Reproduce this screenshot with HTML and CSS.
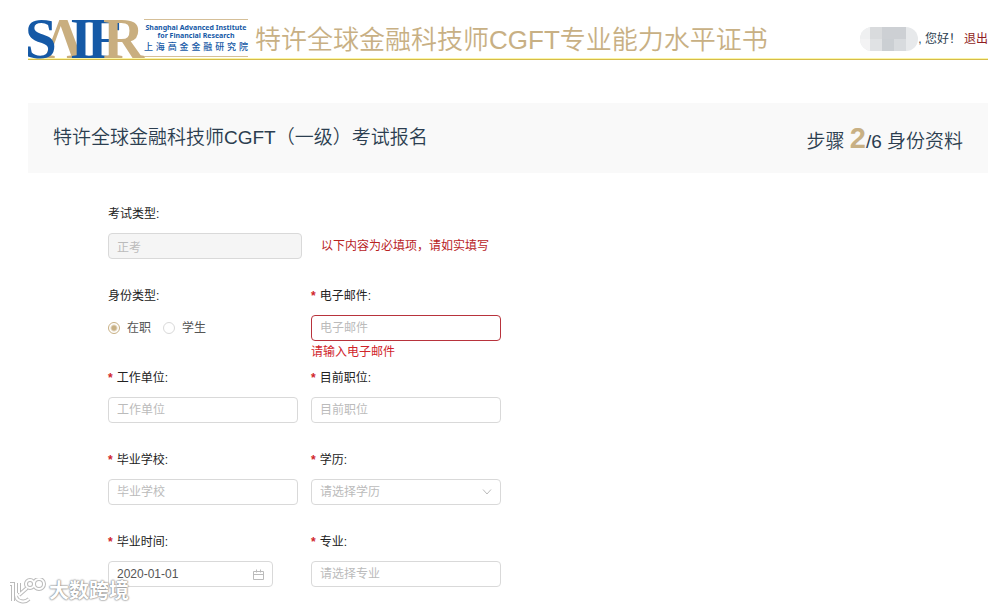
FILE: index.html
```html
<!DOCTYPE html>
<html lang="zh-CN">
<head>
    <meta charset="UTF-8">
    <meta name="viewport" content="width=device-width, initial-scale=1.0">
    <title>特许全球金融科技师CGFT考试报名</title>
    <link rel="stylesheet" href="styles.css">
</head>
<body>
    <header class="header">
        <div class="logo">
            <svg class="logo-mark" width="114" height="40" viewBox="0 0 114 40" role="img" aria-label="SAIFR">
                <text class="gold bold" x="15" y="40">Λ</text>
                <text class="blue bold" x="-3" y="40">S</text>
                <text class="blue bold" x="42" y="40">I</text>
                <text class="blue bold" x="59" y="40">F</text>
                <text class="gold bold" x="75" y="40">R</text>
            </svg>
            <div class="logo-text">
                <span>Shanghai Advanced Institute</span>
                <span>for Financial Research</span>
                <span class="logo-cn">上海高金金融研究院</span>
            </div>
        </div>
        <h1>特许全球金融科技师CGFT专业能力水平证书</h1>
        <div class="user">
            <svg class="user-name" width="58" height="24" viewBox="0 0 58 24" aria-hidden="true">
                <clipPath id="pill"><rect width="58" height="24" rx="12"/></clipPath>
                <g clip-path="url(#pill)">
                    <rect width="58" height="24" fill="#e7e9eb"/>
                    <rect width="10" height="12" fill="#eff0f1"/>
                    <rect x="10" width="12" height="12" fill="#d9dbdd"/>
                    <rect x="22" width="24" height="12" fill="#cdd0d4"/>
                    <rect y="12" width="10" height="12" fill="#f3f3f4"/>
                    <rect x="10" y="12" width="12" height="12" fill="#e0e2e4"/>
                    <rect x="22" y="12" width="12" height="12" fill="#cbcfd3"/>
                    <rect x="34" y="12" width="12" height="12" fill="#d8dbde"/>
                </g>
            </svg>
            <span>, 您好！</span>
            <a href="#">退出</a>
        </div>
    </header>

    <main>
        <div class="title-bar">
            <h2>特许全球金融科技师CGFT（一级）考试报名</h2>
            <div class="step">步骤 <b>2</b>/6 身份资料</div>
        </div>

        <form class="form" novalidate>
            <div class="field wide">
                <label for="examType">考试类型:</label>
                <div class="line">
                    <input class="exam-type" type="text" id="examType" value="正考" disabled>
                    <span class="notice">以下内容为必填项，请如实填写</span>
                </div>
            </div>

            <div class="field" role="radiogroup" aria-labelledby="identityLabel">
                <span class="label" id="identityLabel">身份类型:</span>
                <div class="line radios">
                    <label><input type="radio" name="identity" checked>在职</label>
                    <label><input type="radio" name="identity">学生</label>
                </div>
            </div>
            <div class="field error">
                <label class="required" for="email">电子邮件:</label>
                <input type="email" id="email" placeholder="电子邮件">
                <div class="message">请输入电子邮件</div>
            </div>

            <div class="field">
                <label class="required" for="company">工作单位:</label>
                <input type="text" id="company" placeholder="工作单位">
            </div>
            <div class="field">
                <label class="required" for="position">目前职位:</label>
                <input type="text" id="position" placeholder="目前职位">
            </div>

            <div class="field">
                <label class="required" for="school">毕业学校:</label>
                <input type="text" id="school" placeholder="毕业学校">
            </div>
            <div class="field">
                <label class="required" for="degree">学历:</label>
                <div class="with-icon">
                    <select id="degree">
                        <option value="">请选择学历</option>
                        <option>本科</option>
                        <option>硕士</option>
                        <option>博士</option>
                    </select>
                    <svg width="10" height="10" viewBox="0 0 10 10"><path d="M1 2.5l4 4.5 4-4.5"/></svg>
                </div>
            </div>

            <div class="field">
                <label class="required" for="gradDate">毕业时间:</label>
                <div class="with-icon date">
                    <input type="text" id="gradDate" value="2020-01-01">
                    <svg width="11" height="11" viewBox="0 0 11 11"><path d="M.5 2.5h10v8H.5zM.5 5.5h10M3.5.5v3M7.5.5v3"/></svg>
                </div>
            </div>
            <div class="field">
                <label class="required" for="major">专业:</label>
                <input type="text" id="major" placeholder="请选择专业">
            </div>
        </form>
    </main>

    <div class="watermark">
        <svg width="38" height="27" viewBox="0 0 38 27" aria-hidden="true">
            <g class="wm-shade">
                <path d="M2 6h3v17M11 5v10M19 10l-8 7M8 18c1 6 9 7 13 3"/>
                <circle cx="22" cy="6" r="4"/><circle cx="31" cy="6" r="5"/>
            </g>
            <g class="wm-line">
                <path d="M2 6h3v17M11 5v10M19 10l-8 7M8 18c1 6 9 7 13 3"/>
                <circle cx="22" cy="6" r="4"/><circle cx="31" cy="6" r="5"/>
            </g>
        </svg>
        <span>大数跨境</span>
    </div>
</body>
</html>
```

FILE: styles.css
```css
* {
    box-sizing: border-box;
}
body {
    margin: 0;
    padding: 17px 17px 0 28px;
    font-family: "Liberation Sans", "Noto Sans CJK SC", sans-serif;
    font-size: 12px;
    line-height: 18px;
    color: #222;
    background-color: #fff;
}
h1, h2 {
    margin: 0;
    font-weight: 350;
}

.header {
    display: flex;
    align-items: center;
    height: 43px;
    border-bottom: 1px solid #d6bc4a;
    box-shadow: inset 0 -1px #fbf6a6;
}
.logo {
    display: flex;
    align-items: center;
    gap: 2px;
    margin-right: 7px;
}
.logo-mark {
    overflow: visible;
    font-family: "Liberation Serif", serif;
    font-size: 57px;
}
.bold {
    font-weight: bold;
}
.blue {
    fill: #1559a6;
}
.gold {
    fill: #c9ae7f;
}
.logo-text {
    display: flex;
    flex-direction: column;
    align-items: center;
    width: 104px;
    height: 38px;
    border-top: 1px solid #d5bf98;
    border-bottom: 1px solid #d5bf98;
    font-family: "Noto Sans", "Noto Sans CJK SC", sans-serif;
    font-size: 7px;
    font-weight: bold;
    line-height: 8px;
    padding-top: 4px;
    color: #1559a6;
    white-space: nowrap;
}
.logo-cn {
    align-self: stretch;
    font-size: 9px;
    font-weight: 500;
    line-height: 14px;
    text-align-last: justify;
}
h1 {
    padding-top: 3px;
    font-size: 26px;
    line-height: 38px;
    color: #c8b084;
    white-space: nowrap;
}
.user {
    display: flex;
    align-items: center;
    padding-top: 2px;
    margin-left: auto;
    color: #2c3e50;
    white-space: nowrap;
}
.user a {
    margin-left: 3px;
    color: #8f1d22;
    text-decoration: none;
}

.title-bar {
    display: flex;
    align-items: center;
    justify-content: space-between;
    height: 70px;
    margin-top: 43px;
    padding: 0 25px;
    background-color: #f9f9f9;
    color: #2c3e50;
}
h2, .step {
    font-size: 19px;
    font-weight: 350;
    line-height: 30px;
}
.step {
    padding-top: 4px;
}
.step b {
    font-size: 29px;
    font-weight: 700;
    color: #c8b084;
}

.form {
    display: grid;
    grid-template-columns: 190px 190px;
    column-gap: 13px;
    grid-auto-rows: 82px;
    padding: 32px 0 0 80px;
}
.wide {
    grid-column: 1 / 3;
}
.field > label, .label {
    display: block;
    margin-bottom: 10px;
}
.required::before {
    content: "*";
    margin-right: 4px;
    color: #d0242b;
    font-weight: bold;
}
input, select {
    display: block;
    width: 100%;
    height: 26px;
    margin: 0;
    padding: 0 8px;
    border: 1px solid #d9d9d9;
    border-radius: 4px;
    background-color: #fff;
    font: inherit;
    color: #555;
}
input::placeholder {
    color: #bbb;
    opacity: 1;
}
input:disabled {
    background-color: #f5f5f5;
    color: #bbb;
}
select {
    appearance: none;
    color: #bbb;
}
.line {
    display: flex;
    align-items: center;
    height: 26px;
}
.exam-type {
    width: 194px;
}
.notice {
    margin-left: 19px;
    color: #b8231f;
}
.radios {
    gap: 12px;
    color: #555;
}
.radios label {
    display: flex;
    align-items: center;
    gap: 7px;
}
.radios input {
    appearance: none;
    width: 12px;
    height: 12px;
    padding: 0;
    border-radius: 50%;
}
.radios input:checked {
    border-color: #c8b084;
    background: radial-gradient(circle, #c8b084 2px, #fff 4px);
}
.error input {
    border-color: #b8333c;
}
.message {
    margin-top: 2px;
    color: #d0242b;
}
.with-icon {
    position: relative;
}
.with-icon svg {
    position: absolute;
    top: 8px;
    right: 9px;
    fill: none;
    stroke: #bbb;
    pointer-events: none;
}
.date {
    width: 165px;
}

.watermark {
    position: absolute;
    left: 8px;
    bottom: 4px;
    display: flex;
    align-items: center;
    gap: 3px;
    font-size: 20px;
    font-weight: bold;
    line-height: 28px;
    color: #fff;
    text-shadow: 0 0 2px #888, 0 0 2px #999, 0 0 1px #999;
}
.wm-shade, .wm-line {
    fill: none;
    stroke: #bbb;
    stroke-width: 4;
}
.wm-line {
    stroke: #fff;
    stroke-width: 2;
}
```
